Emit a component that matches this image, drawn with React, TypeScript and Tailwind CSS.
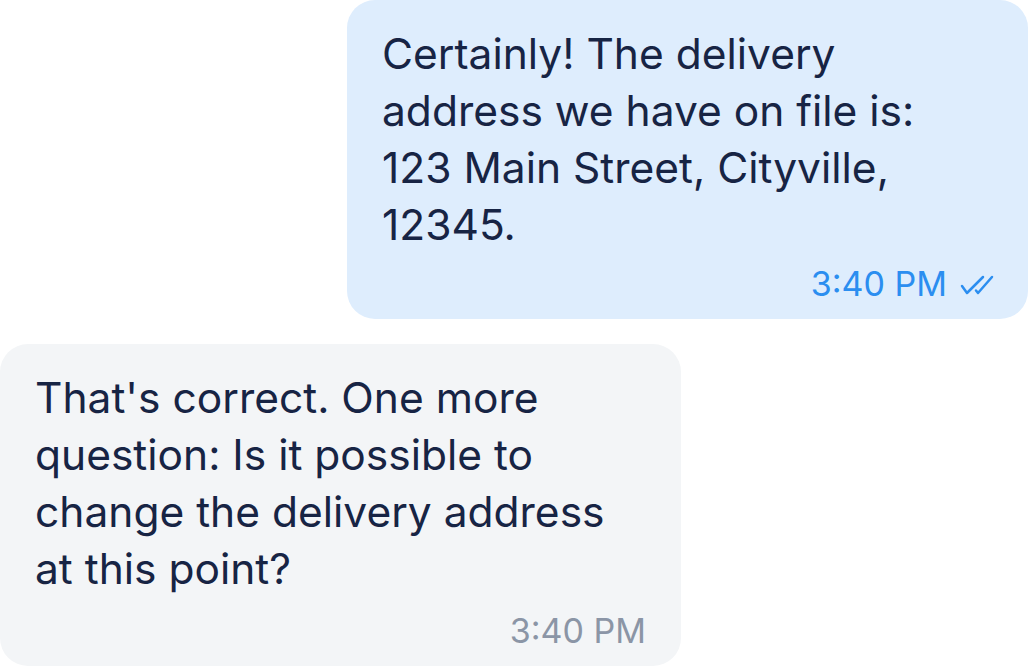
import React from 'react';

const messages = [
  {
    id: 1,
    mine: true,
    text: 'Certainly! The delivery address we have on file is: 123 Main Street, Cityville, 12345.',
    time: '3:40 PM',
  },
  {
    id: 2,
    mine: false,
    text: "That's correct. One more question: Is it possible to change the delivery address at this point?",
    time: '3:40 PM',
  },
];

const DoubleCheck = () => (
  <svg width="34" height="20" viewBox="0 0 34 20" fill="none" stroke="currentColor" strokeWidth="2.5" strokeLinecap="round" strokeLinejoin="round">
    <path d="M2 11l5 7L23 2" />
    <path d="M16 15.5l2 2.5L32 2" />
  </svg>
);

const App: React.FC = () => {
  return (
    <div className="w-[1028px] h-[667px] bg-white overflow-hidden flex flex-col gap-[25px] font-['Inter',sans-serif]">
      {messages.map((m) => (
        <div key={m.id} className={m.mine ? 'flex justify-end' : 'flex justify-start'}>
          <div
            className={
              m.mine
                ? 'w-[681px] rounded-[28px] bg-[#deedfd] pl-[35px] pr-[34px] pt-[25px] pb-[12px]'
                : 'w-[681px] rounded-[28px] bg-[#f3f5f7] pl-[35px] pr-[35px] pt-[25px] pb-[12px]'
            }
          >
            <p className="text-[42.5px] leading-[57px] text-[#172444] pr-[30px]">{m.text}</p>
            <div className={m.mine ? 'mt-[7px] flex items-center justify-end gap-[12px]' : 'mt-[10px] flex items-center justify-end'}>
              <span
                className={
                  m.mine
                    ? 'text-[34px] leading-[47px] text-[#2b8ef0]'
                    : 'text-[34px] leading-[47px] text-[#8b95a6]'
                }
              >
                {m.time}
              </span>
              {m.mine && (
                <span className="text-[#2b8ef0] mt-[2px] ml-[1px]">
                  <DoubleCheck />
                </span>
              )}
            </div>
          </div>
        </div>
      ))}
    </div>
  );
};

export default App;
